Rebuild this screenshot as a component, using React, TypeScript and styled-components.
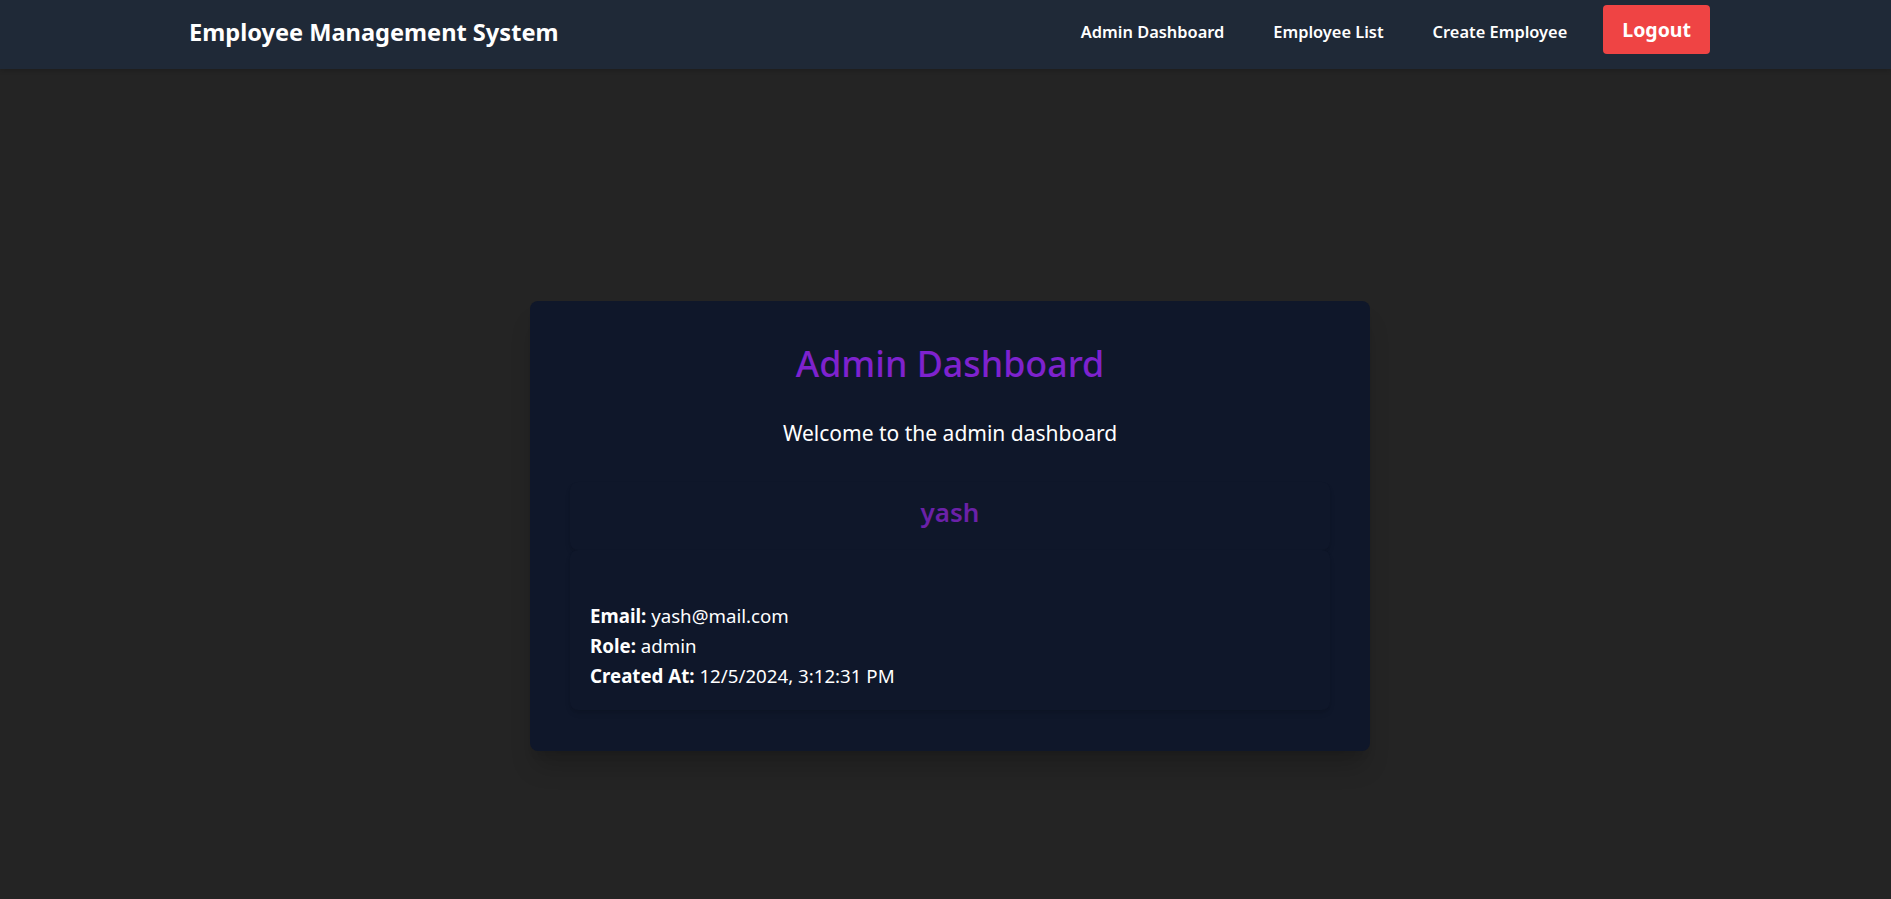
import React from "react";
import styled, { createGlobalStyle } from "styled-components";

const Global = createGlobalStyle`
  html, body { margin: 0; padding: 0; }
  body {
    background: #242424;
    font-family: "Noto Sans", "Open Sans", sans-serif;
    color: #ffffff;
    min-height: 100vh;
  }
  * { box-sizing: border-box; }
`;

const Nav = styled.nav`
  height: 69px;
  background: #1f2937;
  display: flex;
  align-items: center;
  justify-content: space-between;
  padding: 0 181px 0 189px;
  box-shadow: 0 2px 4px rgba(0, 0, 0, 0.15);
`;

const Brand = styled.div`
  font-size: 23.6px;
  font-weight: 700;
  color: #ffffff;
  margin-top: -6px;
`;

const Links = styled.div`
  display: flex;
  align-items: center;
`;

const NavLink = styled.a<{ $gap: number }>`
  font-size: 16.4px;
  font-weight: 600;
  color: #ffffff;
  text-decoration: none;
  margin-right: ${(p) => p.$gap}px;
  margin-top: -6px;
`;

const LogoutButton = styled.button`
  height: 49px;
  padding: 0 19px;
  background: #ef4444;
  color: #ffffff;
  border: none;
  border-radius: 4px;
  font-family: inherit;
  font-size: 19.5px;
  font-weight: 700;
  margin-top: -10px;
`;

const Main = styled.main`
  display: flex;
  justify-content: center;
  padding: 232px 0 0 9px;
`;

const Card = styled.section`
  width: 840px;
  height: 450px;
  padding: 40px;
  background: #0f172a;
  border-radius: 8px;
  box-shadow: 0 20px 25px -5px rgba(0, 0, 0, 0.18), 0 8px 10px -6px rgba(0, 0, 0, 0.12);
  display: flex;
  flex-direction: column;
  align-items: stretch;
`;

const Title = styled.h1`
  margin: 0;
  text-align: center;
  font-size: 35.8px;
  line-height: 40px;
  font-weight: 500;
  color: #7e22ce;
  transform: translateY(2px);
`;

const Welcome = styled.p`
  margin: 38px 0 0;
  text-align: center;
  font-size: 21px;
  line-height: 28px;
  color: #ffffff;
`;

const Panel = styled.div<{ $top: number; $bottom: number }>`
  background: #0f172a;
  border-radius: 8px;
  box-shadow: 0 4px 6px -1px rgba(0, 0, 0, 0.1), 0 2px 4px -2px rgba(0, 0, 0, 0.1);
  padding: ${(p) => p.$top}px 20px ${(p) => p.$bottom}px;
`;

const NamePanel = styled(Panel)`
  margin-top: 35px;
  height: 68px;
  display: flex;
  align-items: center;
  justify-content: center;
`;

const Name = styled.h2`
  margin: 0;
  font-size: 26px;
  line-height: 32px;
  font-weight: 600;
  color: #6b21a8;
`;

const DetailPanel = styled(Panel)`
  height: 160px;
`;

const Line = styled.p`
  margin: 0;
  font-size: 18.7px;
  line-height: 30px;
  color: #ffffff;
`;

const Label = styled.strong`
  font-weight: 700;
`;

export default function App() {
  return (
    <>
      <Global />
      <Nav>
        <Brand>Employee Management System</Brand>
        <Links>
          <NavLink href="#" $gap={49}>Admin Dashboard</NavLink>
          <NavLink href="#" $gap={49}>Employee List</NavLink>
          <NavLink href="#" $gap={36}>Create Employee</NavLink>
          <LogoutButton>Logout</LogoutButton>
        </Links>
      </Nav>
      <Main>
        <Card>
          <Title>Admin Dashboard</Title>
          <Welcome>Welcome to the admin dashboard</Welcome>
          <NamePanel $top={0} $bottom={8}>
            <Name>yash</Name>
          </NamePanel>
          <DetailPanel $top={51} $bottom={17}>
            <Line><Label>Email:</Label> yash@mail.com</Line>
            <Line><Label>Role:</Label> admin</Line>
            <Line><Label>Created At:</Label> 12/5/2024, 3:12:31 PM</Line>
          </DetailPanel>
        </Card>
      </Main>
    </>
  );
}
